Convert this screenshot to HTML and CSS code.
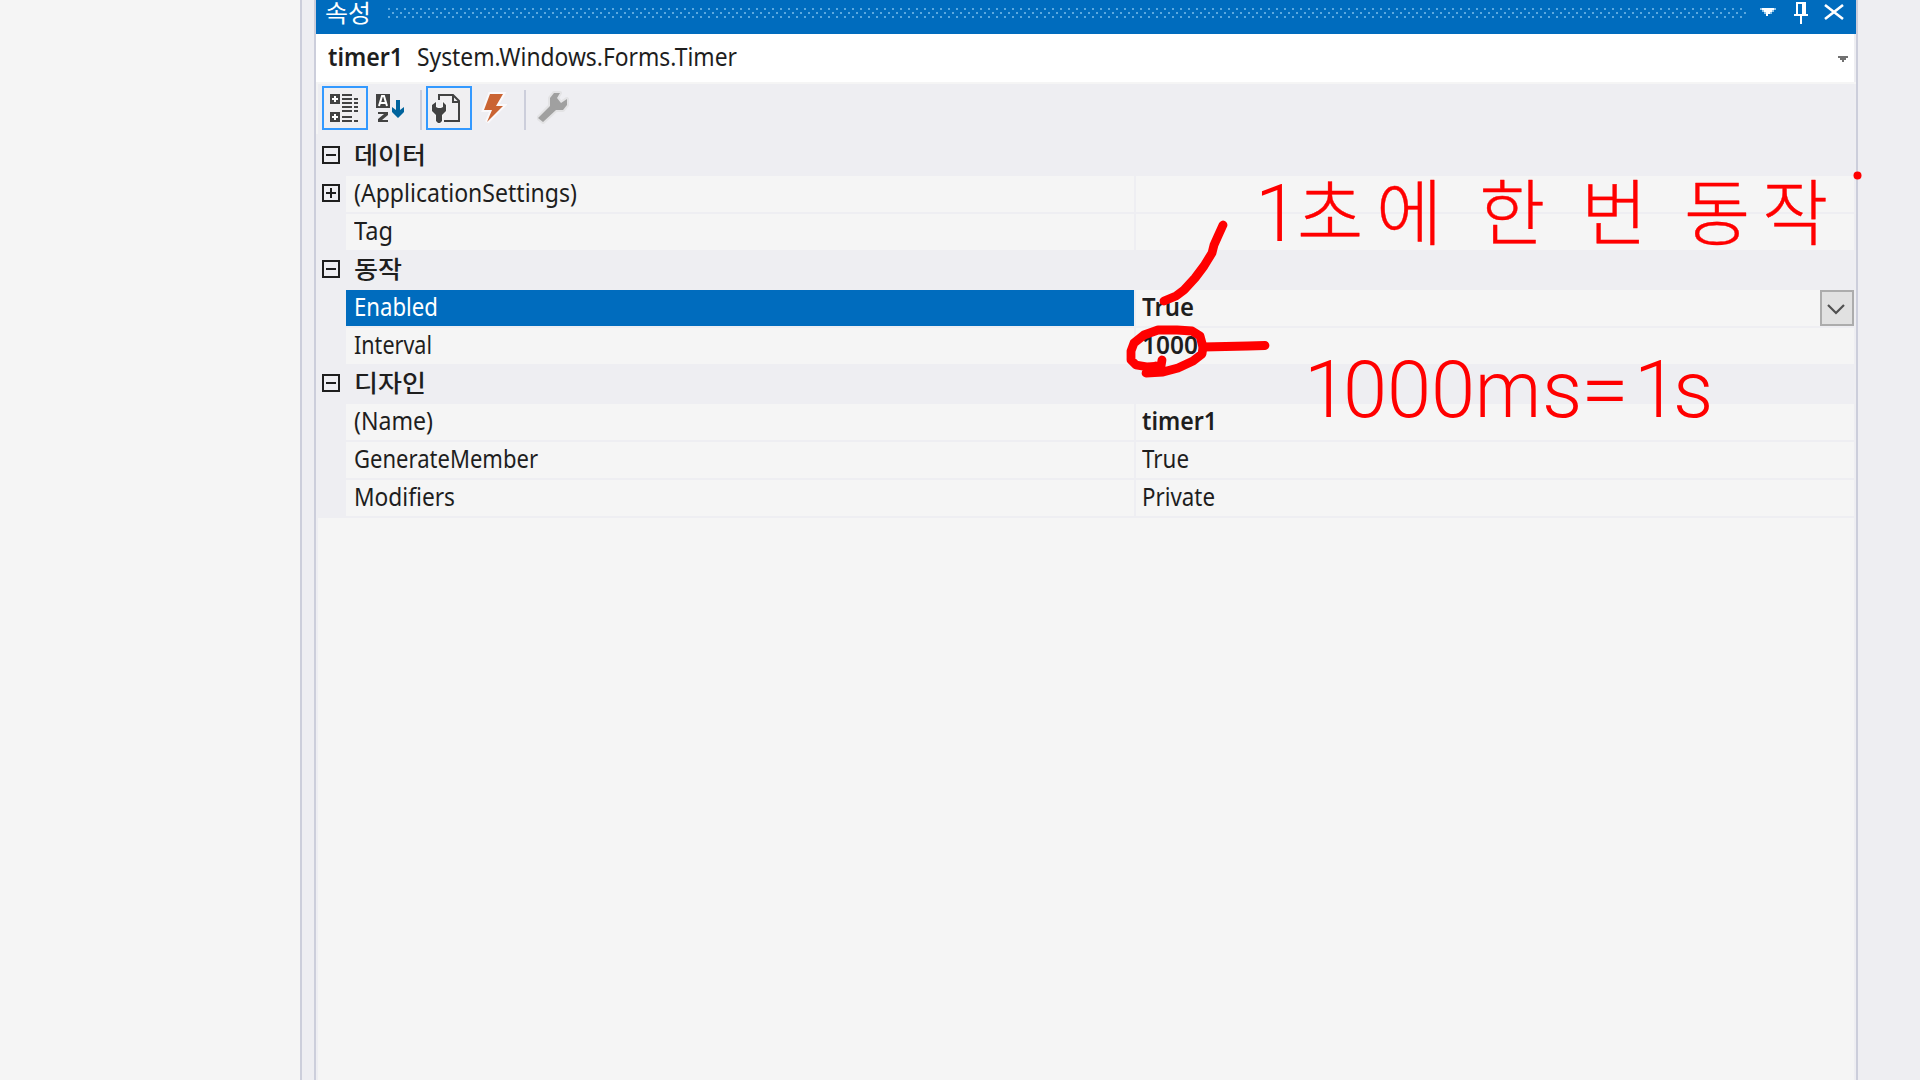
FILE: index.html
```html
<!DOCTYPE html>
<html lang="ko">
<head>
<meta charset="utf-8">
<title>속성</title>
<link rel="stylesheet" href="styles.css">
</head>
<body>
<div class="workspace">
  <div class="editor"></div>
  <section class="panel">
    <header class="titlebar">
      <span class="title"><span class="fit" data-w="46">속성</span></span>
      <svg class="grip" width="1360" height="12" shape-rendering="crispEdges">
        <defs><pattern id="dots" width="8" height="8" patternUnits="userSpaceOnUse"><path d="M0 0h2v2H0zM4 4h2v2H4z" fill="#5ba9e0"/></pattern></defs>
        <rect width="1360" height="10" fill="url(#dots)"/>
      </svg>
      <svg class="controls" width="96" height="34" shape-rendering="crispEdges">
        <path d="M2 8h12v2h-2v2h-2v2h-2v2H6v-2H4v-2H2z" fill="#fff"/>
        <path d="M0 8h2v2H0zM14 8h2v2h-2zM2 12h2v-2H2zM12 10h2v2h-2zM4 14h2v-2H4zM10 12h2v2h-2z" fill="#8fc3e8"/>
        <path d="M36 2h10v12h2v2h-6v8h-2v-8h-6v-2h2zM38 4v10h4V4z" fill="#fff" fill-rule="evenodd"/>
        <path d="M65 5L83 19M83 5L65 19" stroke="#fff" stroke-width="2.6" shape-rendering="auto"/>
      </svg>
    </header>
    <div class="object">
      <b class="fit" data-w="75">timer1</b>
      <span class="type fit" data-w="320">System.Windows.Forms.Timer</span>
      <svg class="arrow" width="10" height="6" shape-rendering="crispEdges"><path d="M0 0h10v2H8v2H6v2H4V4H2V2H0z" fill="#717171"/></svg>
    </div>
    <div class="toolbar">
      <span class="tool active">
        <svg width="42" height="40" shape-rendering="crispEdges">
          <path d="M6 6h10v10H6zM6 24h10v10H6zM18 6h10v2H18zM18 10h10v2H18zM18 14h10v2H18zM18 18h10v2H18zM18 22h10v2H18zM18 28h10v2H18zM18 32h10v2H18zM30 10h4v2h-4zM30 14h4v2h-4zM30 18h4v2h-4zM30 22h4v2h-4zM30 32h4v2h-4z" fill="#424242"/>
          <path d="M10 8h2v2h2v2h-2v2h-2v-2H8v-2h2zM10 26h2v2h2v2h-2v2h-2v-2H8v-2h2z" fill="#fff"/>
        </svg>
      </span>
      <svg class="sort" width="42" height="44" viewBox="0 0 42 44">
        <path d="M6 8h14v14H6zM8 26h10v3l-6 5h6v2H8v-3l6-5H8z" fill="#424242"/>
        <path d="M9 20l3-10h2l3 10M10 17h6" fill="none" stroke="#fff" stroke-width="2"/>
        <path d="M26 14h4v10l4-3v5l-6 6-6-6v-5l4 3z" fill="#00639d"/>
      </svg>
      <i class="sep first"></i>
      <span class="tool active page">
        <svg width="42" height="40" viewBox="0 0 42 40">
          <path d="M11 12V7h14l6 6v20H16" fill="#f0eff1" stroke="#424242" stroke-width="2"/>
          <path d="M25 7v7h7" fill="none" stroke="#424242" stroke-width="2"/>
          <path d="M8 14v5l2 1h3l2-1v-5l3 3v6l-4 4v6l-2 2h-2l-2-2v-6l-4-4v-6z" fill="#424242" stroke="#f5f5f5" stroke-width="2" paint-order="stroke"/>
        </svg>
      </span>
      <svg class="bolt" width="26" height="36" viewBox="0 0 26 36"><path d="M9 3h13l-7 12h7L6 31l5-12H3z" fill="#ca6433" stroke="#faf9fb" stroke-width="4" paint-order="stroke"/></svg>
      <i class="sep second"></i>
      <svg class="wrench" width="32" height="34" viewBox="0 0 32 34">
        <path d="M23 3L20 8l4 5 6-4v6l-4 5h-7L6 32l-5-4 12-12V8l4-5z" fill="#a0a0a0" stroke="#e3e3e5" stroke-width="4" paint-order="stroke" stroke-linejoin="round"/>
      </svg>
    </div>
    <div class="grid">
      <div class="category tall"><i class="expander"></i><b class="fit" data-w="72">데이터</b></div>
      <div class="row"><i class="expander plus"></i><div class="name"><span class="fit" data-w="223">(ApplicationSettings)</span></div><div class="value"></div></div>
      <div class="row last"><div class="name"><span class="fit" data-w="39">Tag</span></div><div class="value"></div></div>
      <div class="category"><i class="expander"></i><b class="fit" data-w="48">동작</b></div>
      <div class="row"><div class="name selected"><span class="fit" data-w="84">Enabled</span></div><div class="value"><b class="fit" data-w="52">True</b>
        <span class="dropdown"><svg width="18" height="12" viewBox="0 0 18 12"><path d="M1 2l8 8 8-8" fill="none" stroke="#505050" stroke-width="2.2"/></svg></span></div></div>
      <div class="row last"><div class="name"><span class="fit" data-w="78">Interval</span></div><div class="value"><b class="fit" data-w="56">1000</b></div></div>
      <div class="category"><i class="expander"></i><b class="fit" data-w="72">디자인</b></div>
      <div class="row"><div class="name"><span class="fit" data-w="79">(Name)</span></div><div class="value"><b class="fit" data-w="75">timer1</b></div></div>
      <div class="row"><div class="name"><span class="fit" data-w="184">GenerateMember</span></div><div class="value"><span class="fit" data-w="47">True</span></div></div>
      <div class="row"><div class="name"><span class="fit" data-w="101">Modifiers</span></div><div class="value"><span class="fit" data-w="73">Private</span></div></div>
    </div>
  </section>
</div>
<svg class="notes" width="1920" height="1080">
  <g class="ink">
    <path d="M1223 225L1218 236 1214 245 1212 253 1204 266 1195 278 1184 290 1176 296 1164 301"/>
    <path d="M1162 360L1161 366 1148 367 1136 365 1131 360 1131 351 1134 343 1144 335 1158 330 1177 330 1192 331 1200 336 1203 347 1202 354 1193 361 1178 368 1163 372 1146 373 1156 366"/>
    <path d="M1203 347L1248 346 1265 345.500"/>
  </g>
  <circle cx="1857.500" cy="175.500" r="4"/>
  <text class="latin" x="1255" y="241">1</text>
  <text class="hangul" y="239" x="1297 1376 1479 1581 1684 1762">초에한번동작</text>
  <text class="latin" y="417" x="1304 1343 1387 1431">1000</text>
  <text class="latin" y="417" x="1475" textLength="66" lengthAdjust="spacingAndGlyphs">m</text>
  <text class="latin" y="417" x="1542">s</text>
  <text class="latin" y="417" x="1581" textLength="48" lengthAdjust="spacingAndGlyphs">=</text>
  <text class="latin" y="417" x="1634 1673">1s</text>
</svg>
<script src="fit.js"></script>
</body>
</html>
```

FILE: styles.css
```css
* { box-sizing: border-box; }
body {
  margin: 0;
  width: 1920px;
  height: 1080px;
  overflow: hidden;
  background: #eeeef2;
  color: #1e1e1e;
  font: 25px/36px "Noto Sans", "Noto Sans CJK KR", sans-serif;
}
svg { display: block; flex: none; }
.workspace { display: flex; height: 1080px; }
.editor { width: 302px; background: #f5f5f5; border-right: 2px solid #cccedb; }
.panel {
  width: 1544px;
  margin-left: 12px;
  border: solid #cccedb;
  border-width: 0 2px;
  display: flex;
  flex-direction: column;
}
.fit { display: inline-block; white-space: nowrap; transform-origin: 0 50%; }
b { font-weight: 600; }

.titlebar { display: flex; height: 34px; background: #006cbe; color: #fff; }
.title { width: 62px; margin-left: 9px; font: 24px/24px "Noto Sans CJK KR", sans-serif; }
.grip { margin: 8px 0 0 1px; }
.controls { margin-left: 12px; }

.object { display: flex; height: 48px; background: #fff; padding: 4px 6px 0 12px; margin-right: 2px; }
.object b { width: 89px; }
.arrow { margin: 18px 0 0 auto; }

.toolbar { display: flex; height: 52px; border-top: 2px solid #f5f5f5; border-left: 2px solid #f5f5f5; padding: 2px 0 0 4px; }
.tool { width: 46px; height: 44px; border: 2px solid #3399ff; background: #f0eff1; }
.sort { margin: 0 4px 0 2px; }
.sep { width: 2px; height: 40px; margin-top: 4px; background: #cccedb; }
.first { margin-left: 4px; }
.page { margin-left: 4px; }
.bolt { margin: 5px 0 0 9px; }
.second { margin-left: 17px; }
.wrench { margin: 4px 0 0 11px; }

.grid { flex: 1; margin: 0 2px; background: #f5f5f5; box-shadow: -2px 0 #eeeef2, 2px 0 #eeeef2; }
.category { height: 40px; padding-left: 36px; position: relative; background: #eeeef2; font: 24px/36px "Noto Sans CJK KR", sans-serif; }
.category b { font-weight: 500; }
.tall { height: 42px; line-height: 39px; }
.expander { position: absolute; left: 4px; top: 10px; width: 18px; height: 18px; border: 2px solid #1e1e1e; background: linear-gradient(#1e1e1e, #1e1e1e) center / 10px 2px no-repeat; }
.tall .expander { top: 12px; }
.plus { top: 8px; background: linear-gradient(#1e1e1e, #1e1e1e) center / 10px 2px no-repeat, linear-gradient(#1e1e1e, #1e1e1e) center / 2px 10px no-repeat; }
.row { display: flex; position: relative; height: 38px; padding-left: 28px; background: linear-gradient(90deg, #eeeef2 28px, #f5f5f5 28px); border-bottom: 2px solid #eeeef2; }
.row.last { height: 36px; border-bottom: 0; }
.name { width: 788px; height: 36px; padding-left: 8px; line-height: 32px; }
.selected { background: #006cbe; color: #fff; }
.value { flex: 1; height: 36px; display: flex; padding-left: 6px; border-left: 2px solid #eeeef2; line-height: 32px; }
.dropdown { width: 34px; height: 36px; margin-left: auto; border: 2px solid #acacac; background: #e1e1e1; padding: 11px 0 0 5px; }

.notes { position: absolute; left: 0; top: 0; fill: #f00; }
.ink { fill: none; stroke: #f00; stroke-width: 8.8; stroke-linecap: round; stroke-linejoin: round; }
.latin { font: 300 79.5px Roboto, sans-serif; }
.hangul { font: 300 72px "Noto Sans CJK KR", sans-serif; stroke: #f00; stroke-width: 0.4; stroke-linejoin: round; }
```

FILE: fit.js
```js
document.querySelectorAll('.fit').forEach(function (el) {
  var range = document.createRange();
  range.selectNodeContents(el);
  var natural = range.getBoundingClientRect().width;
  el.style.transform = 'scaleX(' + (Number(el.dataset.w) / natural) + ')';
});
```
